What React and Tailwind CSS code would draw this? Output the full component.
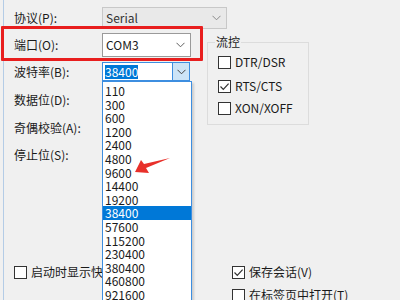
import React from 'react';

const Check = ({ checked }) => (
  <span className="w-[13px] h-[13px] border border-[#333333] bg-white flex items-center justify-center shrink-0">
    {checked && (
      <svg width="11" height="11" viewBox="0 0 11 11">
        <path d="M1.5 5.5 L4.3 8.3 L9.6 2.6" fill="none" stroke="#333333" strokeWidth="1.2" />
      </svg>
    )}
  </span>
);

const Chevron = ({ color = '#606060' }) => (
  <svg width="9" height="6" viewBox="0 0 9 6">
    <path d="M0.5 0.8 L4.5 4.8 L8.5 0.8" fill="none" stroke={color} strokeWidth="1" />
  </svg>
);

const bauds = ['110', '300', '600', '1200', '2400', '4800', '9600', '14400', '19200', '38400', '57600', '115200', '230400', '380400', '460800', '921600'];

const Label = ({ children }) => <span className="w-[88px] shrink-0">{children}</span>;

const App = () => {
  return (
    <div className="relative w-[400px] h-[300px] bg-[#f0f0f0] flex overflow-hidden text-[12px] leading-[14px] text-[#1a1a1a] font-['Noto_Sans_CJK_SC',sans-serif]">
      <div className="w-[3px] shrink-0" />
      <div className="w-px shrink-0 bg-[#b4cce6]" />

      <div className="flex-1 flex flex-col pl-[10px]">
        {/* protocol */}
        <div className="mt-[7px] h-[22px] flex items-center">
          <Label>协议(P):</Label>
          <div className="w-[125px] h-[22px] bg-[#e9e9e9] border border-[#c8c8c8] flex items-center justify-between pl-[3px] pr-[5px] text-[#333]">
            <span>Serial</span>
            <Chevron color="#8a8a8a" />
          </div>
        </div>

        <div className="flex mt-[4px]">
          {/* left column */}
          <div className="flex flex-col">
            <div className="h-[24px] flex items-center">
              <Label>端口(O):</Label>
              <div className="w-[89px] h-[24px] bg-white border border-[#9a9a9a] flex items-center justify-between pl-[3px] pr-[5px]">
                <span>COM3</span>
                <Chevron />
              </div>
            </div>
            <div className="mt-[5px] h-[19px] flex items-center">
              <Label>波特率(B):</Label>
              <div className="w-[88px] h-[19px] bg-white border border-[#3d8ee0] flex items-stretch">
                <div className="flex-1 flex items-center pl-[2px]">
                  <span className="bg-[#0078d7] text-white leading-[14px]">38400</span>
                </div>
                <div className="w-[17px] bg-[#cce4f7] border-l border-[#3d8ee0] flex items-center justify-center">
                  <Chevron color="#404040" />
                </div>
              </div>
            </div>
            <div className="mt-[8px] h-[22px] flex items-center"><Label>数据位(D):</Label></div>
            <div className="mt-[6px] h-[22px] flex items-center"><Label>奇偶校验(A):</Label></div>
            <div className="mt-[5px] h-[22px] flex items-center"><Label>停止位(S):</Label></div>
          </div>

          {/* flow control */}
          <fieldset className="ml-[16px] mt-[2px] w-[102px] self-start border border-[#dcdcdc] pl-[10px] pb-[8px]">
            <legend className="ml-[-3px] px-[1px] leading-[14px]">流控</legend>
            <div className="mt-[5px] h-[16px] flex items-center gap-[4px]"><Check /><span>DTR/DSR</span></div>
            <div className="mt-[8px] h-[16px] flex items-center gap-[4px]"><Check checked /><span>RTS/CTS</span></div>
            <div className="mt-[6px] h-[16px] flex items-center gap-[4px]"><Check /><span>XON/XOFF</span></div>
          </fieldset>
        </div>

        {/* bottom options */}
        <div className="flex mt-[99px]">
          <div className="w-[218px] h-[14px] flex items-center gap-[4px] whitespace-nowrap">
            <Check /><span>启动时显示快速连接</span>
          </div>
          <div className="flex flex-col">
            <div className="h-[14px] flex items-center gap-[4px] whitespace-nowrap"><Check checked /><span>保存会话(V)</span></div>
            <div className="mt-[9px] h-[14px] flex items-center gap-[4px] whitespace-nowrap"><Check /><span>在标签页中打开(T)</span></div>
          </div>
        </div>
      </div>

      {/* red annotation box */}
      <div className="absolute left-[1px] top-[26px] w-[202px] h-[35px] border-[3px] border-[#e81e1e] rounded-[1px]" />

      {/* opened baud list */}
      <div className="absolute left-[102px] top-[81px] w-[90px] h-[240px] bg-white border border-[#3d8ee0] shadow-[2px_2px_2px_rgba(0,0,0,0.15)] pt-[2px]">
        {bauds.map((b) => (
          <div key={b} className={`h-[13.6px] leading-[13.6px] pl-[2px] ${b === '38400' ? 'bg-[#0078d7] text-white' : ''}`}>
            {b}
          </div>
        ))}
      </div>

      {/* red arrow */}
      <svg className="absolute left-0 top-0" width="400" height="300" viewBox="0 0 400 300">
        <polygon points="135,172 141,160 144,164 170,158 146,168 149,173" fill="#e8302a" />
      </svg>
    </div>
  );
};

export default App;
